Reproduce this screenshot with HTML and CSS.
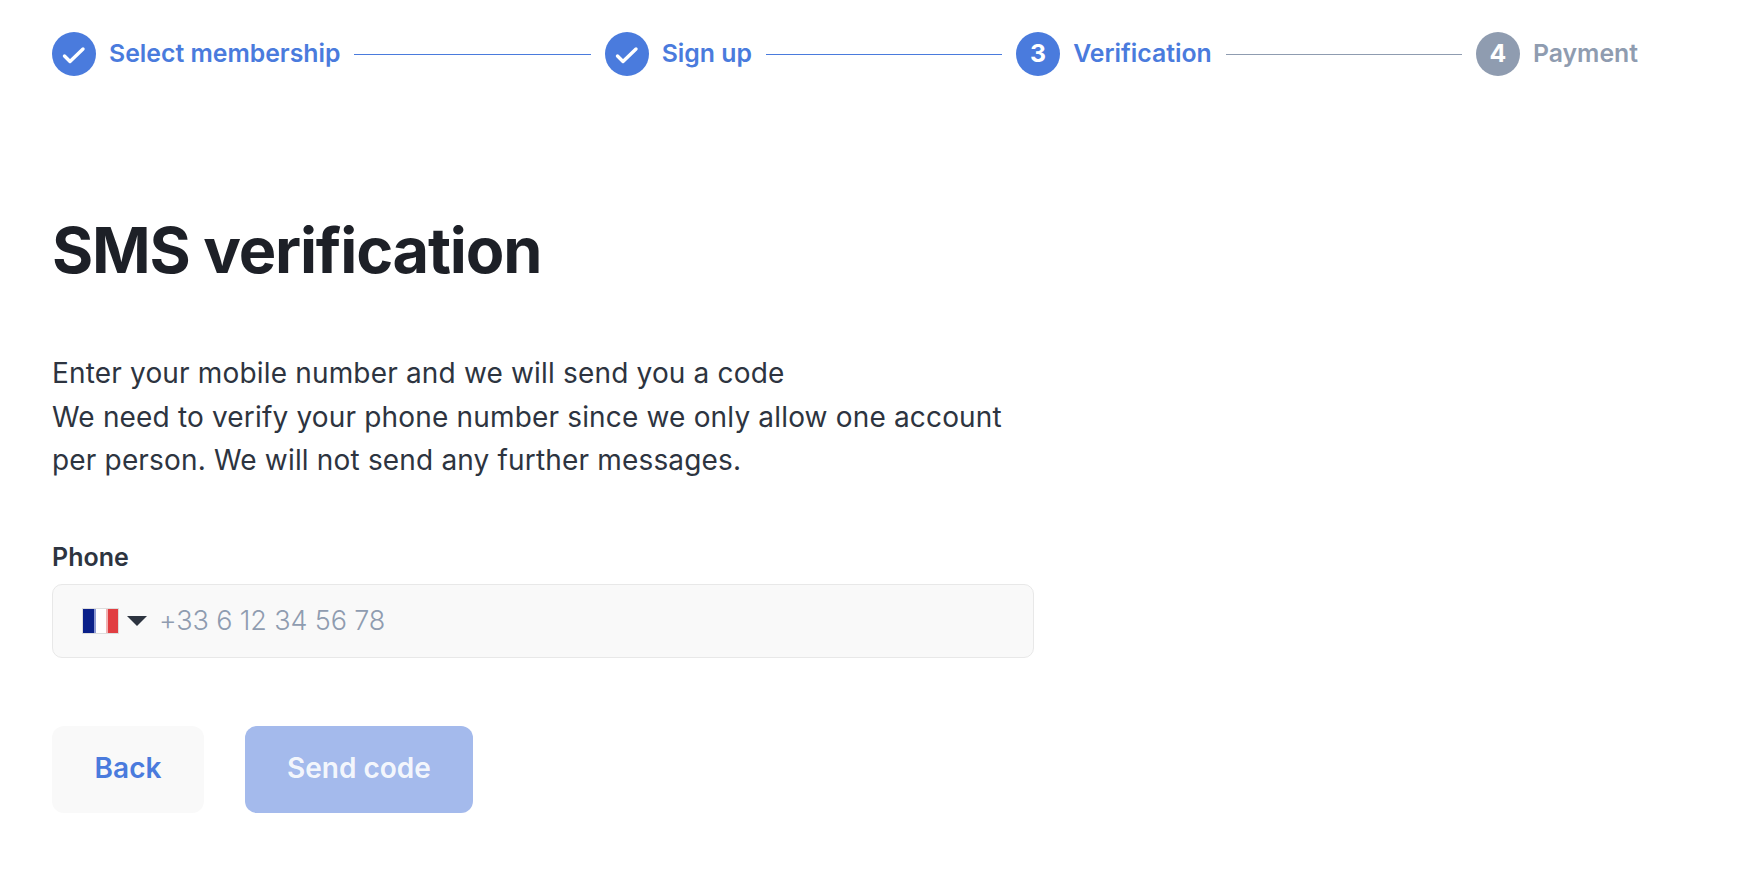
FILE: index.html
```html
<!DOCTYPE html>
<html lang="en">
<head>
    <meta charset="UTF-8">
    <title>SMS verification</title>
    <link rel="stylesheet" href="styles.css">
</head>
<body>
    <!-- Signup steps -->
    <div class="stepper">
        <div class="step">
            <span class="step-circle">
                <svg width="44" height="44" viewBox="0 0 44 44" fill="none" stroke="#fff" stroke-width="3.4" stroke-linecap="round" stroke-linejoin="round">
                    <polyline points="12.5 24 18 29.5 31 17"></polyline>
                </svg>
            </span>
            <span class="step-label">Select membership</span>
        </div>
        <div class="step-line"></div>
        <div class="step">
            <span class="step-circle">
                <svg width="44" height="44" viewBox="0 0 44 44" fill="none" stroke="#fff" stroke-width="3.4" stroke-linecap="round" stroke-linejoin="round">
                    <polyline points="12.5 24 18 29.5 31 17"></polyline>
                </svg>
            </span>
            <span class="step-label">Sign up</span>
        </div>
        <div class="step-line"></div>
        <div class="step">
            <span class="step-circle">3</span>
            <span class="step-label">Verification</span>
        </div>
        <div class="step-line inactive"></div>
        <div class="step inactive">
            <span class="step-circle">4</span>
            <span class="step-label">Payment</span>
        </div>
    </div>

    <div class="content">
        <h1>SMS verification</h1>
        <p class="intro">
            Enter your mobile number and we will send you a code<br>
            We need to verify your phone number since we only allow one account per person. We will not send any further messages.
        </p>

        <label class="field-label" for="phone">Phone</label>
        <div class="phone-field">
            <svg class="flag" width="37" height="26" viewBox="0 0 37 26">
                <rect width="37" height="26" fill="#ddd"></rect>
                <rect x="1" y="1" width="12" height="24" fill="#0a2089"></rect>
                <rect x="12" y="1" width="2" height="24" fill="#8d9ad2"></rect>
                <rect x="14" y="1" width="11" height="24" fill="#fff"></rect>
                <rect x="24" y="1" width="2" height="24" fill="#f0b4b5"></rect>
                <rect x="26" y="1" width="10" height="24" fill="#e13e42"></rect>
            </svg>
            <span class="caret"></span>
            <input class="phone-input" id="phone" type="text" placeholder="+33 6 12 34 56 78" autocomplete="off">
        </div>

        <div class="actions">
            <button class="btn btn-back">Back</button>
            <button class="btn btn-send" disabled>Send code</button>
        </div>
    </div>
</body>
</html>
```

FILE: styles.css
```css
body {
    font-family: Inter, "Noto Sans", sans-serif;
    margin: 0;
    padding: 0;
    background-color: #fff;
    color: #2d3440;
}

/* Stepper */
.stepper {
    display: flex;
    align-items: center;
    gap: 14px;
    padding: 32px 122px 0 52px;
}

.step {
    display: flex;
    align-items: center;
    gap: 13px;
    color: #4a7bdd;
    font-size: 24.8px;
    font-weight: 600;
    white-space: nowrap;
}

.step.inactive {
    color: #8f9cb0;
}

.step-label {
    padding-bottom: 2px;
}

.step-circle {
    width: 44px;
    height: 44px;
    border-radius: 50%;
    background-color: #4a7bdd;
    color: #fff;
    font-weight: 700;
    padding-bottom: 2px;
    box-sizing: border-box;
    display: flex;
    justify-content: center;
    align-items: center;
}

.step-circle svg {
    margin-top: 2px;
}

.step.inactive .step-circle {
    background-color: #8f9cb0;
}

.step-line {
    flex: 1;
    height: 1px;
    background-color: #4a7bdd;
}

.step-line.inactive {
    background-color: #8f9cb0;
}

/* Form */
.content {
    padding-left: 52px;
    width: 982px;
}

h1 {
    margin: 136px 0 0;
    font-size: 63px;
    line-height: 76px;
    font-weight: 700;
    letter-spacing: -1.2px;
    color: #1d2027;
}

.intro {
    margin: 64px 0 0;
    font-size: 28px;
    line-height: 43.5px;
    font-weight: 400;
    letter-spacing: 0.17px;
    width: 960px;
}

.field-label {
    display: block;
    margin-top: 58px;
    margin-bottom: 11px;
    font-size: 25px;
    line-height: 32px;
    font-weight: 600;
}

.phone-field {
    display: flex;
    align-items: center;
    box-sizing: border-box;
    height: 74px;
    padding-left: 29px;
    background-color: #f9f9f9;
    border: 1px solid #e8e8e8;
    border-radius: 10px;
}

.caret {
    width: 0;
    height: 0;
    margin-left: 8px;
    border-left: 10px solid transparent;
    border-right: 10px solid transparent;
    border-top: 10px solid #2d3440;
}

.phone-input {
    flex: 1;
    margin-left: 12px;
    padding: 0;
    border: none;
    outline: none;
    background: transparent;
    font-family: inherit;
    font-size: 27px;
    font-weight: 300;
    letter-spacing: -0.12px;
    color: #2d3440;
}

.phone-input::placeholder {
    color: #8f9cb0;
    opacity: 1;
}

.actions {
    display: flex;
    gap: 41px;
    margin-top: 68px;
}

.btn {
    height: 87px;
    padding: 0 0 2px;
    border: none;
    border-radius: 12px;
    font-family: inherit;
    font-size: 28px;
    font-weight: 600;
}

.btn-back {
    width: 152px;
    background-color: #f9f9f9;
    color: #4a7bdd;
}

.btn-send {
    width: 228px;
    background-color: #a4baec;
    color: rgba(255, 255, 255, 0.9);
}
```
